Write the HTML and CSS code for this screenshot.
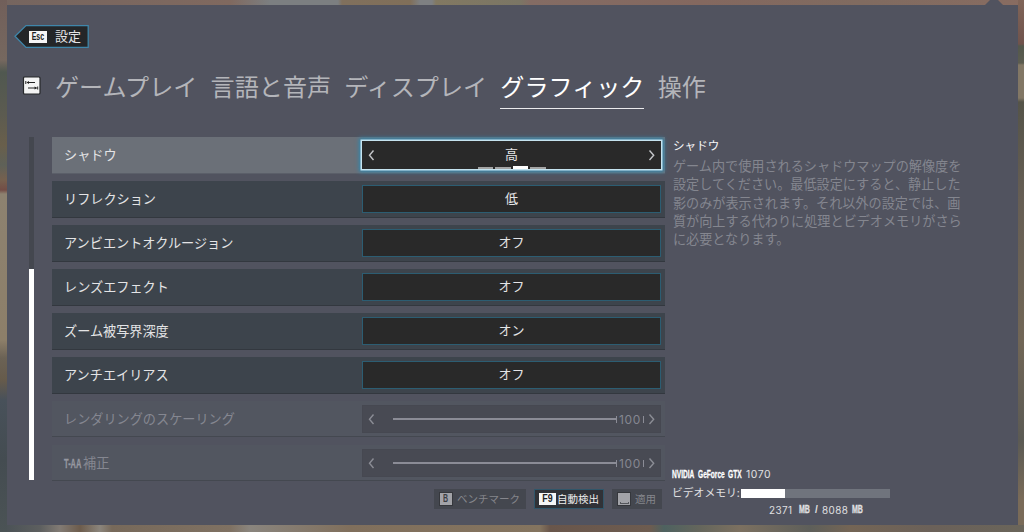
FILE: index.html
```html
<!DOCTYPE html>
<html lang="ja">
<head>
    <meta charset="UTF-8">
    <meta name="viewport" content="width=device-width, initial-scale=1.0">
    <title>設定</title>
    <link rel="stylesheet" href="styles.css">
</head>
<body>
    <div class="backdrop">
        <div class="edge edge-top"></div>
        <div class="edge edge-right"></div>
        <div class="edge edge-bottom"></div>
        <div class="edge edge-left"></div>
    </div>
    <div class="panel">
        <svg class="notch" width="20" height="6" viewBox="0 0 20 6"><path d="M0 6 L6 0 H14 L20 6 Z"/></svg>

        <div class="back">
            <svg class="back-shape" width="76" height="25" viewBox="0 0 76 25"><path d="M1 12.2 L12 1.6 H74.2 V23.4 H12 Z"/></svg>
            <span class="key key-esc"><b>Esc</b></span>
            <span class="back-label">設定</span>
        </div>

        <div class="tabs">
            <svg class="tab-icon" width="19" height="19" viewBox="0 0 19 19">
                <rect class="icon-frame" x="1.5" y="1" width="16.5" height="17" rx="1"/>
                <path class="icon-line" d="M3.8 5 V8 M5 6.5 H13 M6 12 H14.5 M15.7 10.5 V13.5"/>
                <path class="icon-tip" d="M4.5 6.5 L7 5 V8 Z M15.1 12 L12.6 10.5 V13.5 Z"/>
            </svg>
            <span class="tab">ゲームプレイ</span>
            <span class="tab">言語と音声</span>
            <span class="tab">ディスプレイ</span>
            <span class="tab active">グラフィック</span>
            <span class="tab">操作</span>
        </div>

        <div class="main">
            <div class="scrollbar"><div class="thumb"></div></div>

            <div class="list">
                <div class="row selected">
                    <span class="label">シャドウ</span>
                    <div class="value">
                        <svg class="arrow" width="7" height="11" viewBox="0 0 7 11"><path d="M5.5 0.5 L1.5 5.3 L5.5 10"/></svg>
                        <span class="text">高</span>
                        <svg class="arrow" width="7" height="11" viewBox="0 0 7 11"><path d="M1.5 0.5 L5.7 5.3 L1.5 10"/></svg>
                        <div class="pips"><i></i><i></i><i class="on"></i><i></i></div>
                    </div>
                </div>
                <div class="row">
                    <span class="label">リフレクション</span>
                    <div class="value"><span class="text">低</span></div>
                </div>
                <div class="row">
                    <span class="label">アンビエントオクルージョン</span>
                    <div class="value"><span class="text">オフ</span></div>
                </div>
                <div class="row">
                    <span class="label">レンズエフェクト</span>
                    <div class="value"><span class="text">オフ</span></div>
                </div>
                <div class="row">
                    <span class="label">ズーム被写界深度</span>
                    <div class="value"><span class="text">オン</span></div>
                </div>
                <div class="row">
                    <span class="label">アンチエイリアス</span>
                    <div class="value"><span class="text">オフ</span></div>
                </div>
                <div class="row disabled">
                    <span class="label">レンダリングのスケーリング</span>
                    <div class="value">
                        <svg class="arrow" width="7" height="11" viewBox="0 0 7 11"><path d="M5.5 0.5 L1.5 5.3 L5.5 10"/></svg>
                        <div class="slider"></div>
                        <span class="amount">100</span>
                        <svg class="arrow" width="7" height="11" viewBox="0 0 7 11"><path d="M1.5 0.5 L5.7 5.3 L1.5 10"/></svg>
                    </div>
                </div>
                <div class="row disabled">
                    <span class="label"><span class="narrow taa"><b>T-AA</b></span>補正</span>
                    <div class="value">
                        <svg class="arrow" width="7" height="11" viewBox="0 0 7 11"><path d="M5.5 0.5 L1.5 5.3 L5.5 10"/></svg>
                        <div class="slider"></div>
                        <span class="amount">100</span>
                        <svg class="arrow" width="7" height="11" viewBox="0 0 7 11"><path d="M1.5 0.5 L5.7 5.3 L1.5 10"/></svg>
                    </div>
                </div>

                <div class="actions">
                    <div class="action benchmark"><span class="key key-b"><b>B</b></span>ベンチマーク</div>
                    <div class="action detect"><span class="key key-f9"><b>F9</b></span>自動検出</div>
                    <div class="action apply"><span class="key key-space"><i></i></span>適用</div>
                </div>
            </div>

            <div class="info">
                <h2>シャドウ</h2>
                <p>ゲーム内で使用されるシャドウマップの解像度を<br>設定してください。最低設定にすると、静止した<br>影のみが表示されます。それ以外の設定では、画<br>質が向上する代わりに処理とビデオメモリがさら<br>に必要となります。</p>
                <div class="gpu">
                    <div class="gpu-name">
                        <span class="narrow nvidia"><b>NVIDIA</b></span>
                        <span class="narrow geforce"><b>GeForce</b></span>
                        <span class="narrow gtx"><b>GTX</b></span>
                        <span class="digits">1070</span>
                    </div>
                    <div class="memory">
                        <span>ビデオメモリ:</span>
                        <div class="bar"><div class="used" style="width: 29.3%"></div></div>
                    </div>
                    <div class="usage">
                        <span class="digits">2371</span>
                        <span class="narrow mb"><b>MB</b></span>
                        <b class="slash">/</b>
                        <span class="digits">8088</span>
                        <span class="narrow mb"><b>MB</b></span>
                    </div>
                </div>
            </div>
        </div>
    </div>
</body>
</html>
```
FILE: styles.css
```css
* {
    box-sizing: border-box;
}
body {
    margin: 0;
    width: 1024px;
    height: 532px;
    overflow: hidden;
    position: relative;
    padding: 5px 6px 7px 7px;
    background: #77695e;
    font-family: "Noto Sans CJK JP", sans-serif;
    color: #e4e4e6;
}

/* game scene showing round the panel */
.edge {
    position: absolute;
}
.edge-top {
    top: 0;
    left: 0;
    right: 0;
    height: 5px;
    background: linear-gradient(90deg, #75655f 0, #80695f 230px, #7c7f81 270px, #7c7f81 338px, #80705d 342px, #806f59 410px, #7e8082 420px, #7e8082 432px, #827962 436px, #7b7665 520px, #846c64 530px, #84685f 700px, #806b60 860px, #886c61 1024px);
}
.edge-right {
    top: 0;
    right: 0;
    bottom: 0;
    width: 6px;
    background: linear-gradient(180deg, #806558 0, #70534c 44px, #53584c 46px, #5c5c50 63px, #827765 65px, #827765 98px, #555449 102px, #665e54 200px, #716656 340px, #5b5a54 440px, #7a6b58 500px);
}
.edge-bottom {
    left: 0;
    right: 0;
    bottom: 0;
    height: 7px;
    background: linear-gradient(90deg, #485055 0, #5d5f5f 40px, #827b74 60px, #6d5c4c 80px, #8b857c 100px, #77695a 112px, #7f7162 230px, #8a857e 250px, #806f5c 350px, #84745f 540px, #69564b 550px, #6d5c50 650px, #4e6260 664px, #65665c 700px, #7c7060 740px, #5e5f5a 810px, #746555 850px, #6b6159 930px, #6a655a 1024px);
}
.edge-left {
    top: 0;
    left: 0;
    bottom: 0;
    width: 7px;
    background: linear-gradient(180deg, #715f5a 0, #76685f 60px, #505850 72px, #5c5b50 115px, #695f4b 145px, #5e6158 165px, #76604e 180px, #734d46 190px, #8d8270 194px, #8d7f69 340px, #6b6255 358px, #665b4b 380px, #48515a 400px, #444c51 460px, #4b5355 532px);
}

.panel {
    position: relative;
    width: 1011px;
    height: 520px;
    background: #51535f;
    display: flex;
    flex-direction: column;
    padding: 19px 0 0 8px;
}
.notch {
    position: absolute;
    top: -5px;
    left: 977px;
    fill: #51535f;
}

.back {
    position: relative;
    display: flex;
    align-items: center;
    width: 76px;
    height: 25px;
    margin-left: -1px;
}
.back-shape {
    position: absolute;
    left: 0;
    top: 0;
}
.back-shape path {
    fill: #242628;
    stroke: #3f86aa;
    stroke-width: 1.3;
}
.key {
    position: relative;
    display: flex;
    align-items: center;
    justify-content: center;
    flex: none;
    background: #f6f6f6;
    color: #202224;
    font-family: "Liberation Sans", sans-serif;
    font-size: 10px;
    line-height: 1;
}
.key b {
    display: block;
    transform: scaleX(0.7);
}
.key-esc {
    width: 18px;
    height: 12px;
    margin-left: 15px;
}
.back-label {
    position: relative;
    margin: -1px 0 0 8px;
    font-size: 13px;
    line-height: 24px;
}

.tabs {
    display: flex;
    height: 60px;
    margin-top: 21px;
    padding-left: 7px;
}
.tab-icon {
    margin: 6px 14px 0 0;
    flex: none;
}
.icon-frame {
    fill: #f4f4f4;
    stroke: #27292b;
    stroke-width: 1.2;
}
.icon-line {
    fill: none;
    stroke: #222;
    stroke-width: 1;
}
.icon-tip {
    fill: #222;
}
.tab {
    height: 39px;
    margin-right: 13.2px;
    font-size: 24.1px;
    line-height: 32px;
    white-space: nowrap;
    color: #b4b5ba;
}
.tab.active {
    color: #fff;
    border-bottom: 1.5px solid #ebebed;
}

.main {
    display: flex;
    margin-top: 7px;
}
.scrollbar {
    width: 5px;
    height: 343px;
    margin-left: 14px;
    background: #44474f;
    display: flex;
    align-items: flex-end;
}
.thumb {
    width: 5px;
    height: 211px;
    background: #fff;
}
.list {
    width: 613px;
    margin-left: 18px;
}
.row {
    display: flex;
    justify-content: space-between;
    height: 37px;
    margin-bottom: 7px;
    padding: 4px 4px 0 12px;
    background: #3d444c;
    border-bottom: 1px solid #33383f;
}
.label {
    font-size: 13.15px;
    line-height: 27px;
    white-space: nowrap;
}
.value {
    position: relative;
    display: flex;
    align-items: center;
    width: 299px;
    height: 28px;
    background: #292929;
    border: 1px solid #2c5d72;
    padding: 0 5px;
}
.text {
    flex: 1;
    margin-top: -2px;
    text-align: center;
    font-size: 13px;
    line-height: 24px;
}
.arrow {
    flex: none;
}
.arrow path {
    fill: none;
    stroke: #c4c6c9;
    stroke-width: 1.4;
}
.selected {
    background: #6b7078;
    border-bottom-color: #5b5f69;
}
.selected .value {
    border-color: #292929;
    box-shadow: 0 0 0 1.5px #c5e3ef, 0 0 4px 3px #3187ad;
}
.pips {
    position: absolute;
    left: 115px;
    bottom: -1px;
    display: flex;
    gap: 2px;
}
.pips i {
    width: 15.4px;
    height: 2px;
    background: #a5a5a5;
}
.pips .on {
    height: 3px;
    margin-top: -1px;
    background: #fff;
}
.disabled {
    height: 36px;
    margin-bottom: 8px;
    background: #525660;
    border-bottom-color: #444850;
    color: #858791;
}
.disabled .value {
    background: #484a53;
    border-color: #464851;
}
.disabled .arrow path {
    stroke: #8b8d95;
}
.slider {
    width: 224px;
    height: 2px;
    margin-left: 18px;
    background: #8b8c96;
}
.amount {
    height: 7px;
    width: 28px;
    margin-right: 4px;
    border: solid #8b8c96;
    border-width: 0 1px;
    font-family: Inter, sans-serif;
    font-size: 12px;
    line-height: 7px;
    letter-spacing: 0.6px;
    text-align: center;
    flex: none;
}

/* squeezed latin words, each set in the width of its container */
.narrow {
    display: inline-block;
    flex: none;
    font-family: "Liberation Sans", sans-serif;
    line-height: 1;
    white-space: nowrap;
}
.narrow b {
    display: inline-block;
    transform-origin: 0 50%;
    transform: scaleX(0.62);
    -webkit-text-stroke: 0.3px;
}
.taa {
    width: 19px;
    font-size: 12px;
    color: #9698a1;
}

.actions {
    display: flex;
    justify-content: flex-end;
    gap: 8px;
    margin: 6px 3px 0 0;
}
.action {
    display: flex;
    align-items: center;
    height: 20px;
    background: #44474f;
    font-size: 10.5px;
    line-height: 20px;
    color: #85868c;
    white-space: nowrap;
}
.benchmark {
    width: 92px;
    padding-left: 6px;
}
.detect {
    width: 70px;
    padding-left: 4px;
    background: #303237;
    border: 1px solid #30566a;
    color: #eee;
}
.apply {
    width: 50px;
    padding-left: 6px;
}
.key-b,
.key-space {
    width: 12px;
    height: 12px;
    margin-right: 5px;
    background: #a2a3a8;
    color: #3c3e44;
    outline: 1px solid #35373c;
}
.key-f9 {
    width: 17px;
    height: 12px;
    margin: 0 1px 1px 0;
    font-size: 11px;
}
.key-f9 b {
    transform: scaleX(0.8);
}
.key-space i {
    width: 9px;
    height: 2px;
    margin-top: 7px;
    border: solid #55575c;
    border-width: 0 1px 1px;
}

.info {
    display: flex;
    flex-direction: column;
    width: 300px;
    height: 380px;
    margin-left: 7px;
}
.info h2 {
    margin: 0 0 0 1px;
    font-size: 11.6px;
    font-weight: normal;
    line-height: 16px;
    color: #f5f5f6;
}
.info p {
    margin: 4px 0 0 1px;
    font-size: 13.13px;
    line-height: 18.3px;
    white-space: nowrap;
    color: #84868f;
}
.gpu {
    margin-top: 217px;
    color: #e0e0e2;
}
.gpu-name {
    display: flex;
    align-items: center;
    height: 18px;
    padding-top: 1px;
    font-size: 11px;
}
.gpu-name .narrow b {
    transform: scaleX(0.6);
    color: #fff;
}
.nvidia {
    width: 26px;
}
.geforce {
    width: 30px;
}
.gtx {
    width: 18px;
}
.digits {
    font-family: Inter, sans-serif;
    font-size: 10.4px;
    line-height: 18px;
    letter-spacing: 0.6px;
}
.memory {
    display: flex;
    align-items: center;
    height: 19px;
    font-size: 10.8px;
    line-height: 19px;
    white-space: nowrap;
}
.memory span {
    width: 69px;
}
.bar {
    width: 149px;
    height: 9px;
    margin-top: 1px;
    background: #70747d;
}
.used {
    height: 9px;
    background: #fff;
}
.usage {
    display: flex;
    align-items: center;
    height: 15px;
    margin-left: 97px;
    font-size: 10px;
}
.usage .digits {
    width: 26px;
    font-size: 9.9px;
    letter-spacing: 0.4px;
}
.mb {
    width: 11px;
    margin-left: 4px;
}
.mb b {
    transform: scaleX(0.7);
}
.slash {
    width: 7px;
    margin-left: 5px;
    font-family: "Liberation Sans", sans-serif;
}
```
